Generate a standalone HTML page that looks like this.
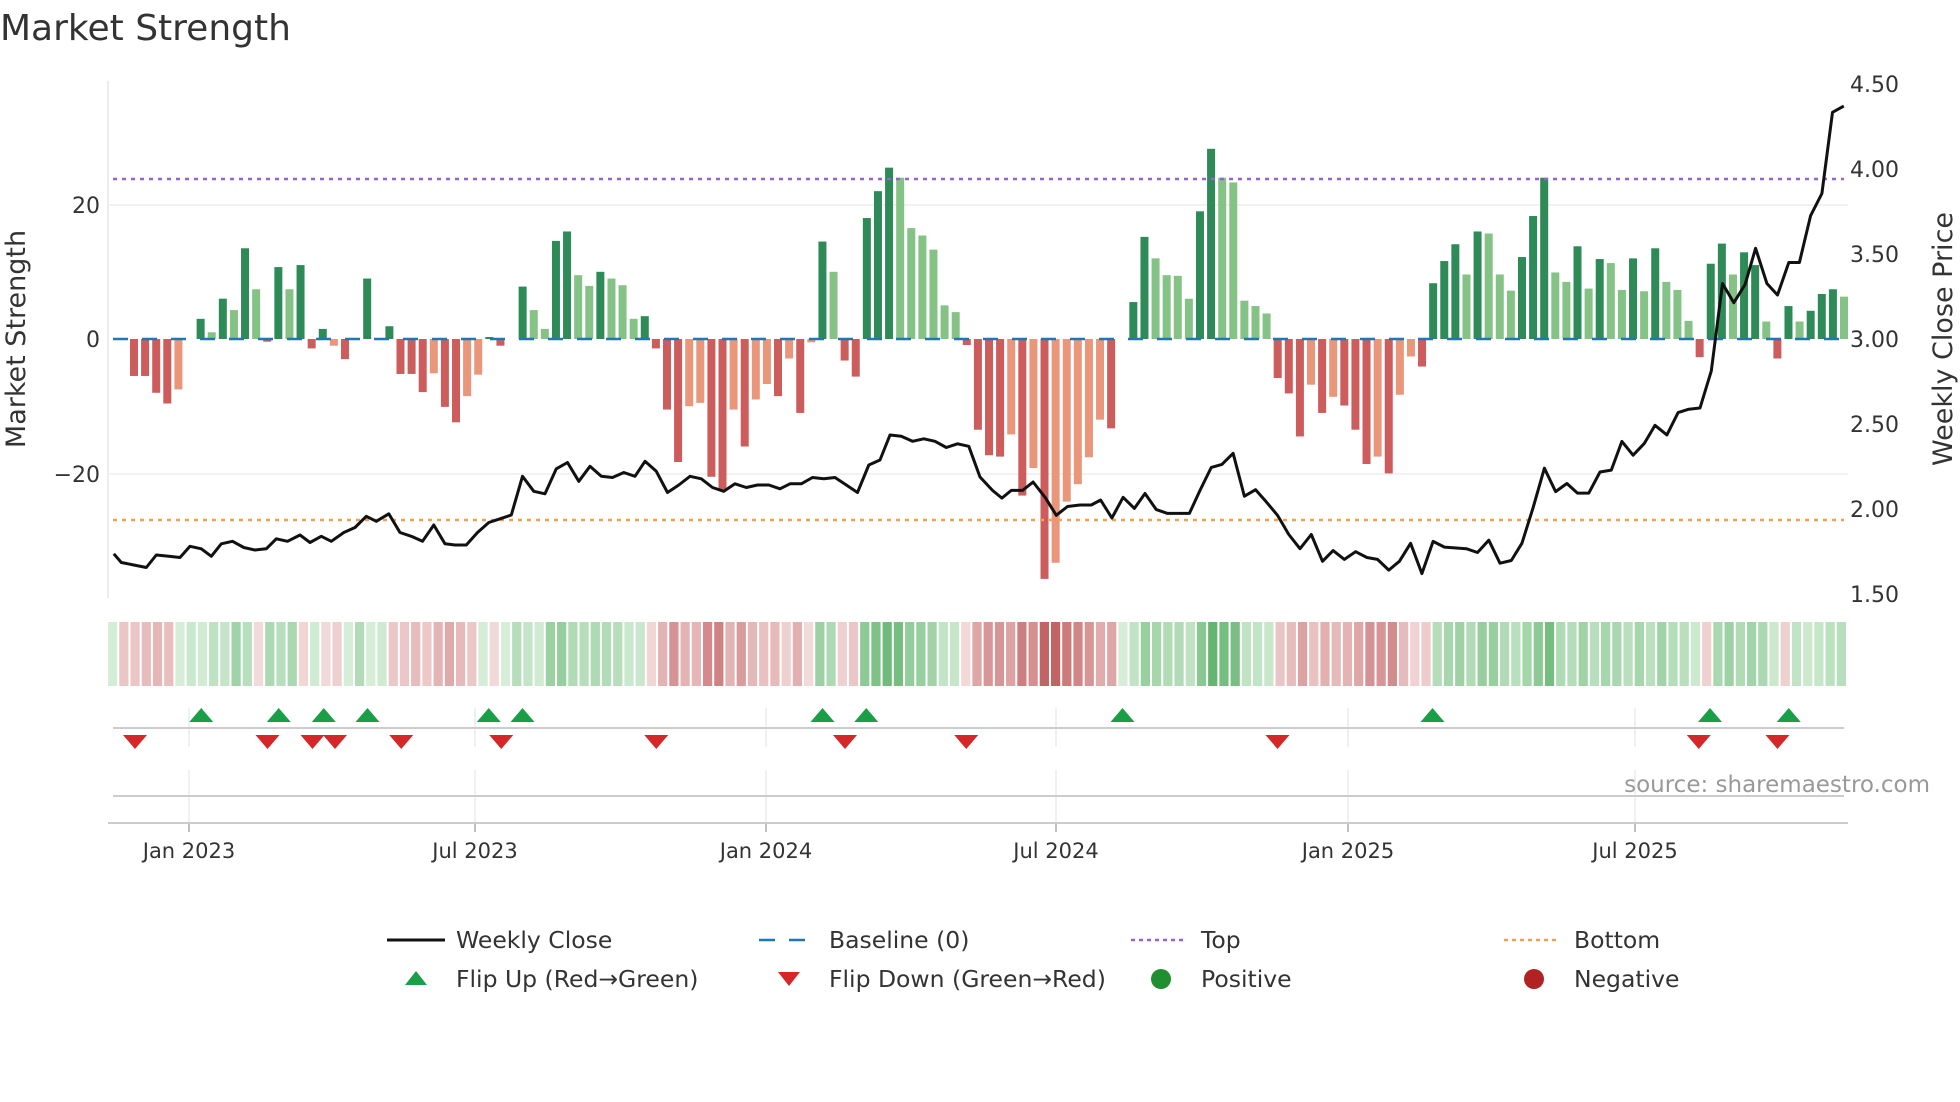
<!DOCTYPE html>
<html><head><meta charset="utf-8"><style>
html,body{margin:0;padding:0;background:#fff;width:1960px;height:1102px;overflow:hidden}
svg{display:block;font-family:"DejaVu Sans","Liberation Sans",sans-serif}
</style></head><body>
<svg id="s" width="1960" height="1102" viewBox="0 0 1960 1102" xmlns="http://www.w3.org/2000/svg">
<text x="0" y="40" font-size="36" fill="#333">Market Strength</text>
<line x1="108" y1="81" x2="108" y2="598" stroke="#e6e6e6" stroke-width="1.5"/>
<line x1="108" y1="205" x2="1848" y2="205" stroke="#eeeeee" stroke-width="1.5"/>
<line x1="108" y1="474" x2="1848" y2="474" stroke="#eeeeee" stroke-width="1.5"/>
<g id="bars"></g>
<line x1="113" y1="339" x2="1844" y2="339" stroke="#1f77b4" stroke-width="2.5" stroke-dasharray="15 14"/>
<line x1="113" y1="179" x2="1844" y2="179" stroke="#9b5fd6" stroke-width="2.5" stroke-dasharray="4 5"/>
<line x1="113" y1="520" x2="1844" y2="520" stroke="#f0a050" stroke-width="2.5" stroke-dasharray="4 5"/>
<polyline id="price" fill="none" stroke="#111" stroke-width="3" stroke-linejoin="round"/>
<g font-size="22" fill="#333" text-anchor="end">
<text x="100" y="213">20</text><text x="100" y="347">0</text><text x="100" y="482">−20</text>
</g>
<g font-size="22" fill="#333">
<text x="1850" y="92">4.50</text><text x="1850" y="177">4.00</text><text x="1850" y="262">3.50</text>
<text x="1850" y="347">3.00</text><text x="1850" y="432">2.50</text><text x="1850" y="517">2.00</text><text x="1850" y="602">1.50</text>
</g>
<text transform="translate(25,339) rotate(-90)" font-size="27" fill="#333" text-anchor="middle">Market Strength</text>
<text transform="translate(1952,339) rotate(-90)" font-size="27" fill="#333" text-anchor="middle">Weekly Close Price</text>
<g id="strip"></g>
<g stroke="#e8ecf0" stroke-width="1.5" id="vgrid"></g>
<line x1="113" y1="728" x2="1844" y2="728" stroke="#ccc" stroke-width="2"/>
<line x1="113" y1="796" x2="1844" y2="796" stroke="#ccc" stroke-width="2"/>
<line x1="108" y1="823" x2="1848" y2="823" stroke="#ccc" stroke-width="2"/>
<g id="tri"></g>
<text x="1930" y="792" font-size="23" fill="#999" text-anchor="end">source: sharemaestro.com</text>
<g font-size="21" fill="#333" text-anchor="middle">
<text x="189" y="858">Jan 2023</text><text x="475" y="858">Jul 2023</text><text x="766" y="858">Jan 2024</text>
<text x="1056" y="858">Jul 2024</text><text x="1348" y="858">Jan 2025</text><text x="1635" y="858">Jul 2025</text>
</g>
<g font-size="23.5" fill="#333">
<line x1="387" y1="940" x2="445" y2="940" stroke="#111" stroke-width="3"/>
<text x="456" y="948">Weekly Close</text>
<line x1="759" y1="940" x2="814" y2="940" stroke="#1f77b4" stroke-width="2.5" stroke-dasharray="16 14"/>
<text x="829" y="948">Baseline (0)</text>
<line x1="1131" y1="940" x2="1186" y2="940" stroke="#9b5fd6" stroke-width="2.5" stroke-dasharray="4 4"/>
<text x="1201" y="948">Top</text>
<line x1="1504" y1="940" x2="1559" y2="940" stroke="#f0a050" stroke-width="2.5" stroke-dasharray="4 4"/>
<text x="1574" y="948">Bottom</text>
<polygon points="405,985 427,985 416,971" fill="#1a9e48"/>
<text x="456" y="987">Flip Up (Red→Green)</text>
<polygon points="778,972 800,972 789,986" fill="#d62728"/>
<text x="829" y="987">Flip Down (Green→Red)</text>
<circle cx="1161" cy="979" r="10" fill="#1f8f2f"/>
<text x="1201" y="987">Positive</text>
<circle cx="1534" cy="979" r="10" fill="#b22222"/>
<text x="1574" y="987">Negative</text>
</g>
</svg>
<script>
var NS="http://www.w3.org/2000/svg";
function el(t,a,p){var e=document.createElementNS(NS,t);for(var k in a)e.setAttribute(k,a[k]);p.appendChild(e);return e;}
var D="#2e8b57",L="#85c285",R="#cd5c5c",O="#e9967a";
var B=[[-5.5,R],[-5.5,R],[-8,R],[-9.6,R],[-7.5,O],[0,D],[3,D],[1,L],[6,D],[4.3,L],[13.5,D],[7.4,L],[-0.4,R],[10.7,D],[7.4,L],[11,D],[-1.4,R],[1.5,D],[-1,O],[-3,R],[0,D],[9,D],[0,D],[1.9,D],
[-5.2,R],[-5.2,R],[-7.9,R],[-5.1,O],[-10.1,R],[-12.4,R],[-8.5,O],[-5.3,O],[0.3,D],[-1,R],[0,D],[7.8,D],[4.3,L],[1.5,L],[14.6,D],[16,D],[9.5,L],[7.9,L],[10,D],[9,L],[8,L],[3,L],[3.4,D],[-1.4,R],[-10.5,R],[-18.3,R],[-10,O],[-9.5,O],[-20.5,R],[-22.5,R],[-10.5,O],[-16,R],[-9,O],[-6.7,O],[-8.5,R],[-2.9,O],[-11,R],[-0.5,O],[14.5,D],[10,L],[-3.2,R],[-5.6,R],[18,D],[22,D],[25.5,D],[24,L],[16.5,L],[15.4,L],[13.3,L],[5,L],[4,L],[-0.9,R],[-13.5,R],
[-17.3,R],[-17.5,R],[-14.2,O],[-23.3,R],[-19.2,O],[-35.7,R],[-33.3,O],[-24.2,O],[-21.6,O],[-17.6,O],[-12,O],[-13.3,R],[0,D],[5.5,D],[15.2,D],[12,L],[9.5,L],[9.4,L],[6,L],[19,D],[28.3,D],[24,L],[23.3,L],[5.7,L],[4.9,L],[3.8,L],[-5.8,R],[-8.1,R],[-14.5,R],[-6.8,O],[-11,R],[-8.6,O],[-9.9,R],[-13.5,R],[-18.6,R],[-17.5,O],[-20,R],[-8.3,O],[-2.6,O],[-4.1,R],[8.3,D],[11.6,D],[14.1,D],[9.6,L],[16,D],[15.7,L],[9.6,L],[7.2,L],[12.2,D],[18.3,D],[24,D],[9.9,L],[8.5,L],[13.8,D],[7.5,L],[11.9,D],[11.3,L],[7.3,L],[12,D],[7.1,L],[13.5,D],[8.5,L],[7.3,L],[2.7,L],[-2.7,R],[11.2,D],[14.2,D],[9.6,L],[12.9,D],[11,D],[2.6,L],[-2.9,R],[4.9,D],[2.6,L],[4.2,D],[6.7,D],[7.4,D],[6.3,L]];
var bg=document.getElementById("bars"),sg=document.getElementById("strip");
var step=(1844-134)/(B.length-1);
function col(v){var t=Math.min(1,Math.abs(v)/30);
 if(v>=0)return "rgb("+Math.round(214-t*120)+","+Math.round(238-t*60)+","+Math.round(216-t*110)+")";
 return "rgb("+Math.round(244-t*50)+","+Math.round(220-t*120)+","+Math.round(220-t*120)+")";}
B.forEach(function(b,i){
 var cx=134+i*step,h=Math.abs(b[0])*6.72;
 if(h>0.5) el("rect",{x:cx-4,y:b[0]>0?339-h:339,width:8,height:h,fill:b[1]},bg);
 var v=i==0?0.5:B[i-1][0];
 el("rect",{x:108+i*(1740/B.length),y:622,width:1740/B.length-2,height:64,fill:col(v)},sg);
});
var P1=[[91,443],[97,450],[107,452],[117,454],[125,444],[135,445],[144,446],[152,437],[161,439],[169,445],[177,435],[186,433],[195,438],[204,440],[213,439],[221,431],[230,433],[240,428],[248,434],[257,429],[265,433],[275,426],[284,422],[293,413],[301,417],[311,411],[320,426],[329,429],[338,433],[347,420],[356,435],[364,436],[373,436],[382,426],[391,418],[400,415],[409,412],[418,381],[427,393],[436,395],[445,375],[454,370],[463,385],[472,373],[481,381],[490,382],[499,378],[508,381],[516,369],[525,377],[534,394],[543,388],[552,381],[561,383],[570,390],[579,393],[588,387],[597,390],[606,388],[615,388],[624,391],[632,387],[641,387],[650,382],[659,383],[668,382],[677,388],[686,394],[695,372],[704,368],[712,348],[721,349],[730,353],[739,351],[748,353],[757,358],[766,355],[775,357]];
var P2=[[0,1245],[20,1280],[35,1300],[50,1280],[68,1280],[85,1258],[105,1300],[122,1345],[140,1322],[160,1318],[178,1318],[193,1305],[211,1352],[229,1298],[247,1327],[264,1288],[282,1330],[300,1340],[335,1340],[352,1280],[370,1220],[387,1212],[405,1183],[423,1295],[441,1278],[458,1310],[476,1345],[494,1395],[512,1432],[530,1395],[548,1465],[565,1437],[583,1460],[601,1440],[619,1455],[636,1460],[654,1488],[671,1465],[689,1418],[707,1497],[725,1413],[743,1428],[778,1432],[796,1442],[814,1410],[832,1470],[850,1463],[867,1418],[885,1325],[903,1222],[921,1283],[939,1262],[956,1287],[974,1287],[992,1232],[1010,1227],[1027,1152],[1045,1188],[1063,1157],[1080,1110],[1099,1135],[1117,1077],[1134,1068],[1152,1065],[1170,968],[1188,740],[1206,790],[1224,743],[1241,648],[1259,740],[1276,770],[1294,685],[1311,685],[1329,563],[1347,505],[1364,293],[1382,277]];
var pts=P1.map(function(p){return (p[0]*1.25).toFixed(1)+","+(p[1]*1.25).toFixed(1)}).concat(P2.map(function(p){return (980+p[0]/1.6).toFixed(1)+","+(p[1]/2.61).toFixed(1)}));
document.getElementById("price").setAttribute("points",pts.join(" "));
var vg=document.getElementById("vgrid");
[189,475,766,1056,1348,1635].forEach(function(x){el("line",{x1:x,y1:708,x2:x,y2:747},vg);el("line",{x1:x,y1:770,x2:x,y2:822},vg);el("line",{x1:x,y1:823,x2:x,y2:832,stroke:"#aaa"},vg);});
var tg=document.getElementById("tri");
[161,223,259,294,391,418,658,693,898,1146,1368,1431].forEach(function(x){x*=1.25;el("polygon",{points:(x-12)+",722 "+(x+12)+",722 "+x+",708",fill:"#1a9e48"},tg);});
[108,214,250,268,321,401,525,676,773,1022,1359,1422].forEach(function(x){x*=1.25;el("polygon",{points:(x-12)+",735 "+(x+12)+",735 "+x+",749",fill:"#d62728"},tg);});
</script>
</body></html>
